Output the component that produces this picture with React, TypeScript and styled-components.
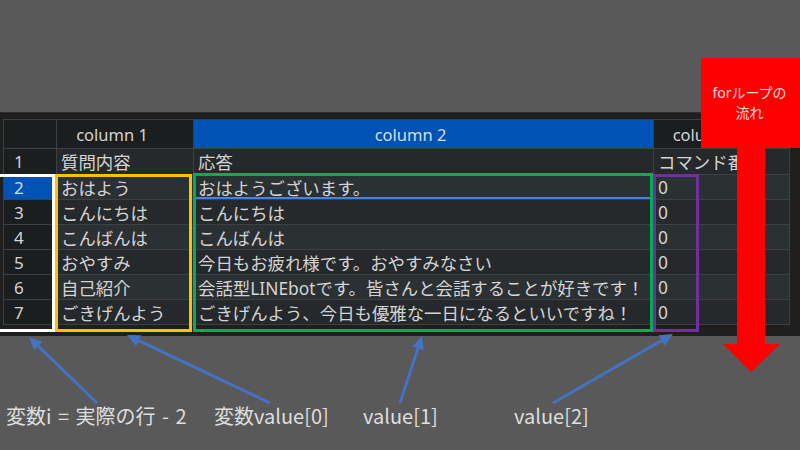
import React from 'react';
import styled, { createGlobalStyle } from 'styled-components';

const Global = createGlobalStyle`
  html, body { margin: 0; padding: 0; background: #595959; }
  body {
    width: 800px; height: 450px; overflow: hidden;
    font-family: "Noto Sans", "Noto Sans CJK JP", sans-serif;
  }
`;

const Page = styled.div`
  position: relative;
  width: 800px;
  height: 450px;
  background: #595959;
  display: flex;
  flex-direction: column;
`;

const TopGap = styled.div`
  flex: none;
  height: 112px;
`;

const Panel = styled.div`
  flex: none;
  height: 224px;
  box-sizing: border-box;
  background: #1f1f1f;
  border-top: 1px solid #2c2c2c;
  padding: 6px 0 0 3px;
  display: flex;
`;

const Table = styled.div`
  display: grid;
  grid-template-columns: 53px 137px 460px 136px;
  grid-template-rows: 29px 26px repeat(6, 25px);
  border-left: 1px solid #3d4144;
  border-top: 1px solid #3d4144;
  align-self: flex-start;
`;

type Kind = 'corner' | 'colhead' | 'rowhead' | 'cell';

const bgFor = (k: Kind, sel: boolean, alt: boolean) => {
  if (sel) return '#0052b4';
  if (k === 'cell') return alt ? '#2b3033' : '#25292b';
  return '#1b1e1f';
};

const Cell = styled.div<{ $kind: Kind; $sel?: boolean; $alt?: boolean; $edit?: boolean }>`
  box-sizing: border-box;
  border-right: 1px solid #3d4144;
  border-bottom: 1px solid #3d4144;
  background: ${(p) => bgFor(p.$kind, !!p.$sel, !!p.$alt)};
  color: ${(p) => (p.$sel ? '#d6deea' : '#d4d4d4')};
  font-size: ${(p) => (p.$kind === 'cell' ? '17.4px' : p.$kind === 'colhead' ? '16.5px' : '17px')};
  display: flex;
  align-items: center;
  justify-content: ${(p) => (p.$kind === 'colhead' ? 'center' : 'flex-start')};
  padding-left: ${(p) => (p.$kind === 'rowhead' ? '10px' : p.$kind === 'colhead' ? '0' : '4px')};
  padding-right: ${(p) => (p.$kind === 'colhead' ? '26px' : '0')};
  white-space: nowrap;
  overflow: hidden;
  box-shadow: ${(p) => (p.$edit ? 'inset 0 -2px 0 #4a82e4' : 'none')};
`;

const Frame = styled.div<{ $x: number; $y: number; $w: number; $h: number; $c: string; $t: number }>`
  position: absolute;
  left: ${(p) => p.$x}px;
  top: ${(p) => p.$y}px;
  width: ${(p) => p.$w}px;
  height: ${(p) => p.$h}px;
  box-sizing: border-box;
  border: ${(p) => p.$t}px solid ${(p) => p.$c};
  pointer-events: none;
`;

const Callout = styled.div`
  position: absolute;
  left: 701px;
  top: 58px;
  width: 99px;
  height: 315px;
  display: flex;
  flex-direction: column;
  align-items: center;
`;

const CalloutBox = styled.div`
  align-self: stretch;
  height: 90px;
  flex: none;
  background: #ff0000;
  display: flex;
  flex-direction: column;
  align-items: center;
  justify-content: center;
  color: #ffdede;
  font-family: "Noto Sans", "Noto Sans CJK JP", sans-serif;
  font-size: 14px;
  line-height: 20px;
  padding-right: 2px;
`;

const CalloutTail = styled.svg`
  display: block;
  flex: none;
  align-self: flex-start;
`;

const Overlay = styled.svg`
  position: absolute;
  left: 0;
  top: 0;
  pointer-events: none;
`;

const Labels = styled.div`
  flex: none;
  display: grid;
  grid-template-columns: 6px 208px 149px 151px 1fr;
  padding-top: 67px;
  color: #dedede;
  font-family: "Noto Sans CJK JP", sans-serif;
  font-size: 20px;
  line-height: 26px;
  word-spacing: 2px;
`;

const Label = styled.div<{ $col: number }>`
  grid-column: ${(p) => p.$col};
  white-space: nowrap;
`;

const rows: string[][] = [
  ['1', '質問内容', '応答', 'コマンド番号'],
  ['2', 'おはよう', 'おはようございます。', '0'],
  ['3', 'こんにちは', 'こんにちは', '0'],
  ['4', 'こんばんは', 'こんばんは', '0'],
  ['5', 'おやすみ', '今日もお疲れ様です。おやすみなさい', '0'],
  ['6', '自己紹介', '会話型LINEbotです。皆さんと会話することが好きです！', '0'],
  ['7', 'ごきげんよう', 'ごきげんよう、今日も優雅な一日になるといいですね！', '0'],
];

const arrows: [number, number, number, number][] = [
  [97, 403, 29, 337],
  [270, 403, 127, 335],
  [400, 403, 422, 336],
  [553, 403, 673, 334],
];

export default function App() {
  return (
    <>
      <Global />
      <Page>
        <TopGap />
        <Panel>
          <Table>
            <Cell $kind="corner" />
            <Cell $kind="colhead">column 1</Cell>
            <Cell $kind="colhead" $sel>column 2</Cell>
            <Cell $kind="colhead">column 3</Cell>
            {rows.map((r, i) => (
              <React.Fragment key={r[0]}>
                <Cell $kind="rowhead" $sel={r[0] === '2'}>{r[0]}</Cell>
                <Cell $kind="cell" $alt={i % 2 === 1}>{r[1]}</Cell>
                <Cell $kind="cell" $alt={i % 2 === 1} $edit={r[0] === '2'}>{r[2]}</Cell>
                <Cell $kind="cell" $alt={i % 2 === 1}>{r[3]}</Cell>
              </React.Fragment>
            ))}
          </Table>
        </Panel>
        <Labels>
          <Label $col={2}>変数i = 実際の行 - 2</Label>
          <Label $col={3}>変数value[0]</Label>
          <Label $col={4}>value[1]</Label>
          <Label $col={5}>value[2]</Label>
        </Labels>

        <Frame $x={-3} $y={174} $w={58} $h={158} $c="#ffffff" $t={3} />
        <Frame $x={55} $y={174} $w={137} $h={158} $c="#ffc000" $t={3} />
        <Frame $x={193} $y={173} $w={460} $h={159} $c="#00b050" $t={3} />
        <Frame $x={653} $y={174} $w={46} $h={158} $c="#7030a0" $t={3} />

        <Overlay width="800" height="450" viewBox="0 0 800 450">
          {arrows.map(([x1, y1, x2, y2], i) => {
            const dx = x2 - x1;
            const dy = y2 - y1;
            const len = Math.hypot(dx, dy);
            const ux = dx / len;
            const uy = dy / len;
            const hl = 13;
            const hw = 6;
            const bx = x2 - ux * hl;
            const by = y2 - uy * hl;
            const pts = `${x2},${y2} ${bx - uy * hw},${by + ux * hw} ${bx + uy * hw},${by - ux * hw}`;
            return (
              <g key={i}>
                <line x1={x1} y1={y1} x2={bx} y2={by} stroke="#4472c4" strokeWidth={3} />
                <polygon points={pts} fill="#4472c4" />
              </g>
            );
          })}
        </Overlay>

        <Callout>
          <CalloutBox>
            <span>forループの</span>
            <span>流れ</span>
          </CalloutBox>
          <CalloutTail width="99" height="225" viewBox="0 0 99 225">
            <polygon points="36,0 64,0 64,196 79,196 50,224 22,196 36,196" fill="#ff0000" />
          </CalloutTail>
        </Callout>
      </Page>
    </>
  );
}
